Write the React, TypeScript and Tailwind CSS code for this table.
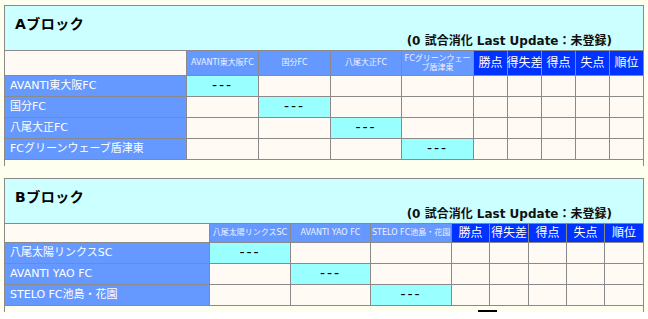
import React from "react";

type Block = {
  title: string;
  teams: string[];
  cols: string;
  headRow: string;
  wrapHead?: Record<number, string[]>;
};

const STATS = ["勝点", "得失差", "得点", "失点", "順位"];

const blocks: Block[] = [
  {
    title: "Aブロック",
    teams: ["AVANTI東大阪FC", "国分FC", "八尾大正FC", "FCグリーンウェーブ盾津東"],
    cols: "grid-cols-[181px_71px_71px_70px_71px_33px_33px_33px_33px_33px]",
    headRow: "h-[24px]",
    wrapHead: { 3: ["FCグリーンウェー", "ブ盾津東"] },
  },
  {
    title: "Bブロック",
    teams: ["八尾太陽リンクスSC", "AVANTI YAO FC", "STELO FC池島・花園"],
    cols: "grid-cols-[204px_80px_79px_80px_37px_38px_37px_37px_38px]",
    headRow: "h-[18px]",
  },
];

function LeagueTable({ block, last }: { block: Block; last: boolean }) {
  const n = block.teams.length;
  return (
    <div className={`w-[640px] bg-[#8a8a8a] px-px pt-px ${last ? "" : "mb-[12px]"}`}>
      <div className={`grid ${block.cols} gap-px pb-px`}>
        {/* block heading */}
        <div className="col-span-full h-[44px] bg-[#ccffff] flex flex-col">
          <div className="pt-[10px] pl-[10px] text-[14px] leading-[16px] font-bold text-black tracking-[0.5px]">
            {block.title}
          </div>
          <div className="mt-[2px] pr-[31px] text-right text-[12px] leading-[14px] font-bold text-[#111]">
            (0 試合消化 Last Update：未登録)
          </div>
        </div>

        {/* column heads */}
        <div className={`${block.headRow} bg-[#fffaf4]`} />
        {block.teams.map((t, i) => (
          <div
            key={t}
            className={`${block.headRow} bg-[#6699ff] text-[#eef2ff] text-[8px] overflow-hidden flex flex-col justify-center`}
          >
            {block.wrapHead && block.wrapHead[i] ? (
              block.wrapHead[i].map((line) => (
                <div key={line} className="text-center whitespace-nowrap leading-[9px]">
                  {line}
                </div>
              ))
            ) : (
              <div className="text-center whitespace-nowrap leading-[10px] px-px">{t}</div>
            )}
          </div>
        ))}
        {STATS.map((s) => (
          <div
            key={s}
            className={`${block.headRow} bg-[#0033ff] text-white text-[12px] leading-[14px] flex items-center justify-center whitespace-nowrap`}
          >
            {s}
          </div>
        ))}

        {/* result rows */}
        {block.teams.map((t, r) => (
          <React.Fragment key={t}>
            <div className="h-[20px] bg-[#6699ff] text-white text-[11px] leading-[20px] pl-[5px] whitespace-nowrap overflow-hidden">
              {t}
            </div>
            {Array.from({ length: n }).map((_, c) =>
              c === r ? (
                <div
                  key={c}
                  className="h-[20px] bg-[#99ffff] text-black text-[14px] leading-[19px] text-center tracking-[2px]"
                >
                  ---
                </div>
              ) : (
                <div key={c} className="h-[20px] bg-[#fffaf4]" />
              )
            )}
            {STATS.map((s) => (
              <div key={s} className="h-[20px] bg-[#fffaf4]" />
            ))}
          </React.Fragment>
        ))}
      </div>
      <div className="h-[6px] bg-[#fffff0] pt-[4px]">
        {last ? <div className="ml-[473px] w-[19px] h-[2px] bg-black" /> : null}
      </div>
    </div>
  );
}

export default function App() {
  return (
    <div className="w-[648px] h-[319px] bg-white overflow-hidden font-['DejaVu_Sans','Noto_Sans_CJK_JP',sans-serif]">
      <div className="h-[312px] bg-[#fffff0] pt-[5px] pl-[4px]">
        {blocks.map((b, i) => (
          <LeagueTable key={b.title} block={b} last={i === blocks.length - 1} />
        ))}
      </div>
    </div>
  );
}
